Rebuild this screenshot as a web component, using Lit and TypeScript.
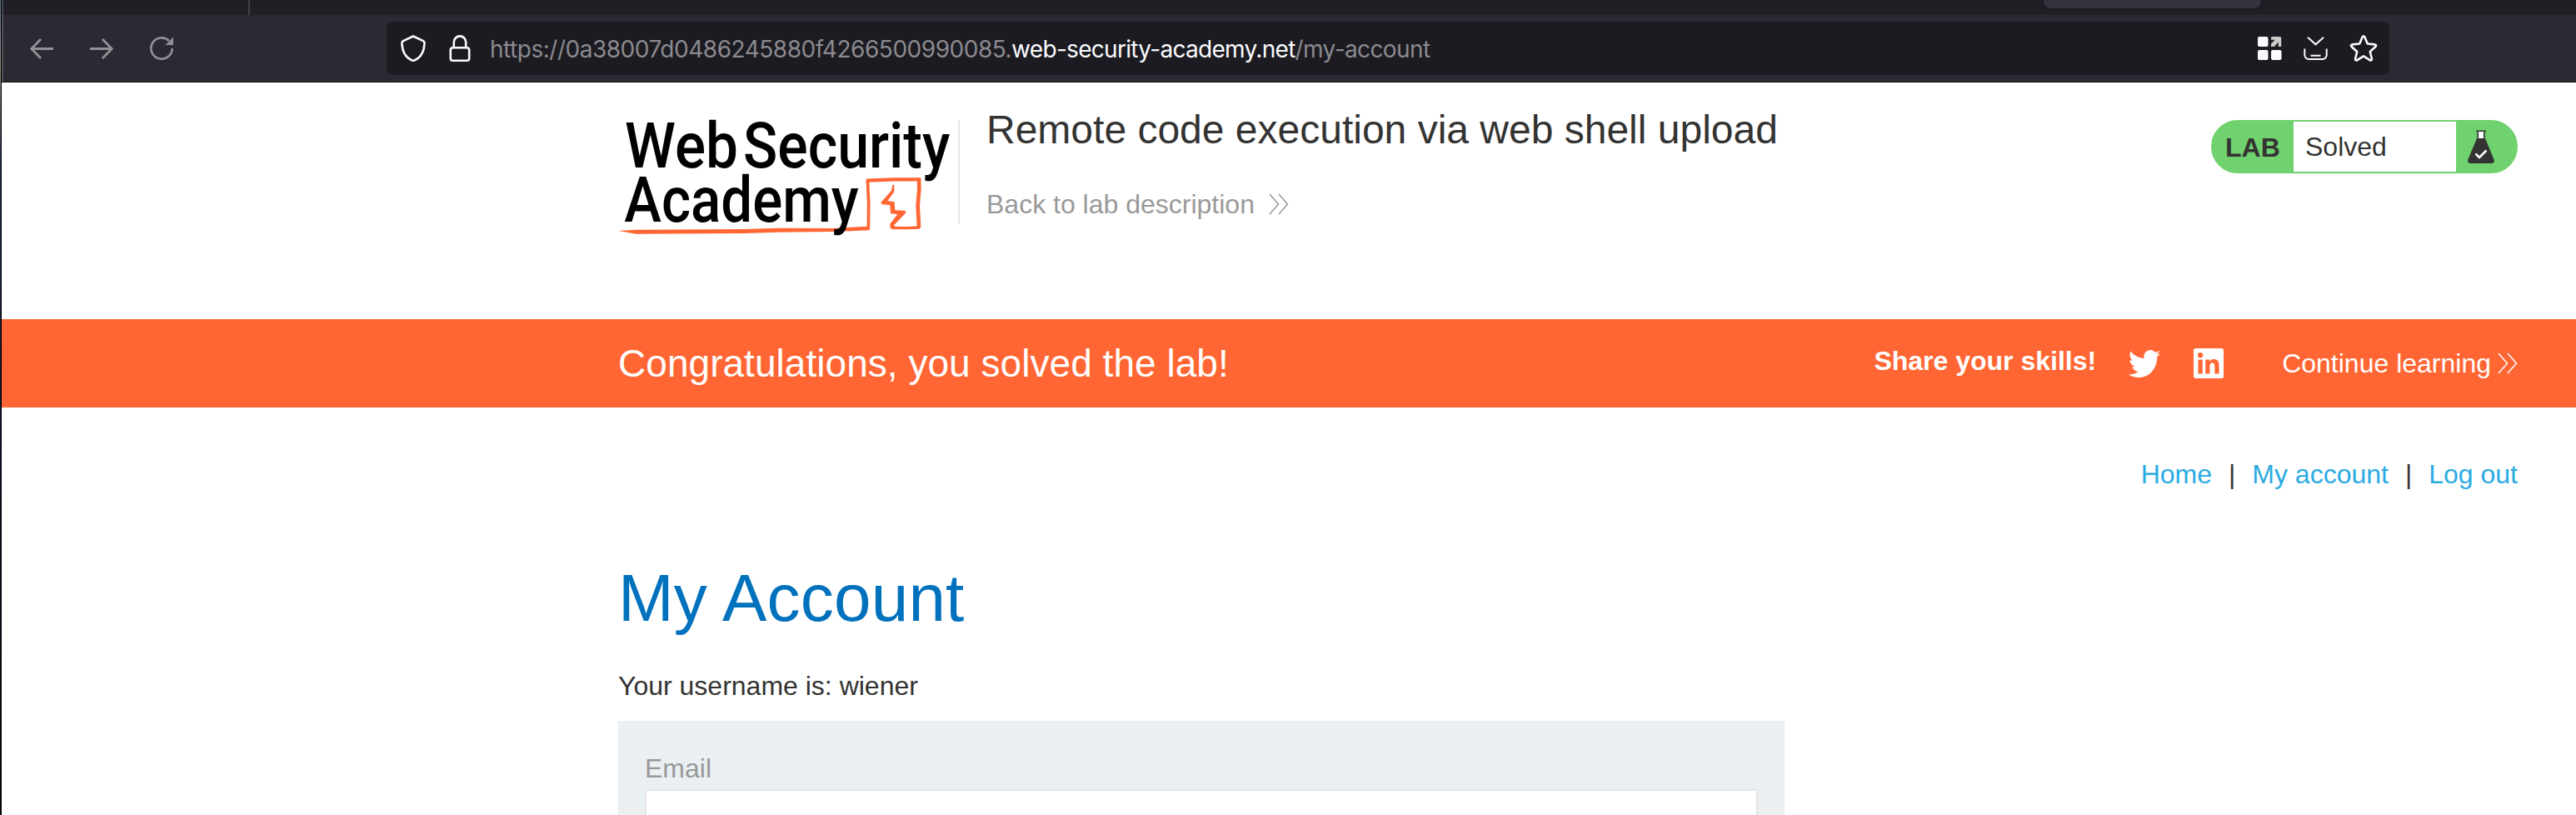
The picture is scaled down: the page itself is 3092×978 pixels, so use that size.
import { LitElement, html, css } from "lit";
import { customElement } from "lit/decorators.js";

const chevrons = html`<svg class="chev" viewBox="0 0 24 26" width="24" height="26">
  <path d="M1 1 L11.5 13 L1 25 M12 1 L22.5 13 L12 25" fill="none" stroke="currentColor" stroke-width="1.5" /></svg>`;

@customElement("browser-chrome")
class BrowserChrome extends LitElement {
  static styles = css`
    :host { display: block; font-family: Inter, sans-serif; }
    .tabs { height: 18px; background: #201f25; display: flex; align-items: flex-start; border-left: 2px solid #46464d; }
    .sep { width: 2px; height: 18px; margin-left: 294px; background: #424148; }
    .tab { width: 261px; height: 10px; margin-left: 2153px; border-radius: 0 0 8px 8px; background: #35323e; box-shadow: 0 0 4px #15141a; }
    .bar { height: 80px; background: #2b2a33; display: flex; align-items: center; border-left: 2px solid #50505a; }
    .edge { height: 1px; background: #0c0c0d; }
    .nav { display: flex; gap: 44px; padding-left: 32px; width: 428px; color: #929096; }
    .url { width: 2404px; height: 64px; border-radius: 8px; background: #1c1b21; display: flex; align-items: center; color: #fbfbfe; }
    .shield { margin-left: 17px; }
    .lock { margin-left: 28px; }
    .address { margin-left: 23px; padding-top: 2px; font-size: 28px; line-height: 40px; white-space: pre; color: #8b8a8f; flex: 1; letter-spacing: -0.48px; }
    .host { color: #fbfbfe; letter-spacing: -0.7px; }
    .path { letter-spacing: -0.6px; }
    .actions { display: flex; gap: 26px; padding-right: 14px; align-items: center; }
    svg { display: block; }
  `;
  render() {
    return html`
      <div class="tabs"><div class="sep"></div><div class="tab"></div></div>
      <div class="bar">
        <div class="nav">
          <svg width="28" height="28" viewBox="0 0 28 28" fill="none" stroke="currentColor" stroke-width="2.8"><path d="M28 14.5H2M13 3L1.8 14.5L13 26" /></svg>
          <svg width="28" height="28" viewBox="0 0 28 28" fill="none" stroke="currentColor" stroke-width="2.8"><path d="M0 14.5H26M15 3L26.2 14.5L15 26" /></svg>
          <svg width="28" height="28" viewBox="0 0 28 28" fill="none" stroke="currentColor" stroke-width="2.6"><path d="M26.7 14A12.7 12.7 0 1 1 22.8 4.9" /><path d="M28 .5V10H18.5Z" fill="currentColor" stroke="none" /></svg>
        </div>
        <div class="url">
          <svg class="shield" width="30" height="32" viewBox="0 0 30 32" fill="none" stroke="currentColor" stroke-width="2.6" stroke-linejoin="round"><path d="M15 1.5L27 7.2Q28.8 8.2 28.5 10.5C28 20 24 27 17 30.2Q15 31 13 30.2C6 27 2 20 1.5 10.5Q1.2 8.2 3 7.2Z" /></svg>
          <svg class="lock" width="26" height="32" viewBox="0 0 26 32" fill="none" stroke="currentColor" stroke-width="2.6"><rect x="1.8" y="15.3" width="22.4" height="15.4" rx="2.8" /><path d="M5.8 15V8.6a7.2 7.2 0 0 1 14.4 0V15" /></svg>
          <div class="address">https://0a38007d0486245880f4266500990085.<span class="host">web-security-academy.net</span><span class="path">/my-account</span></div>
          <div class="actions">
            <svg width="30" height="28" viewBox="0 0 30 28" fill="currentColor"><rect x="1" width="12.5" height="12" rx="2" /><rect x="1" y="16" width="12.5" height="12" rx="2" /><rect x="17" y="16" width="12.5" height="12" rx="2" /><path fill="#cbcbcb" d="M17.8 0H27.5Q29.2 0 29.2 2V12H25.8V6.6L20.8 12H17V8.4L21.7 3.8H17V1Z" /></svg>
            <svg width="29" height="28" viewBox="0 0 29 28" fill="none" stroke="currentColor" stroke-width="2"><path d="M5 .8L14.5 9.3L24 .8M1.3 14.5V22a5 5 0 0 0 5 5H22.7a5 5 0 0 0 5-5V14.5M8.5 22.8H20.5" /></svg>
            <svg width="34" height="32" viewBox="0 0 34 32" fill="none" stroke="currentColor" stroke-width="2.6" stroke-linejoin="round"><path d="M15.6 2.4Q17 .2 18.4 2.4L21.8 10.5L30.6 11.4Q33 12 31.4 14L24.8 20L26.9 28.5Q27 31 24.6 30.2L17 25.4L9.4 30.2Q7 31 7.1 28.5L9.2 20L2.6 14Q1 12 3.4 11.4L12.2 10.5Z" /></svg>
          </div>
        </div>
      </div>
      <div class="edge"></div>`;
  }
}

@customElement("academy-logo")
class AcademyLogo extends LitElement {
  static styles = css`
    :host { display: block; }
    svg { display: block; overflow: visible; }
    .word { font-family: Roboto, sans-serif; font-weight: 500; font-size: 229px; fill: #000; }
    .line { fill: none; stroke: #ff6633; stroke-linejoin: round; }
    .fill { fill: #ff6633; }
  `;
  render() {
    return html`<svg width="408" height="147" viewBox="66 60 1224 441">
      <path class="fill" d="M66 471 L130 467 L520 465 L640 461 L840 462 L962 455 L972 460 L970 469 L840 474 L640 476 L520 480 L130 482 Z" />
      <path class="line" stroke-width="11" d="M967 465 L968 370 L964 286" />
      <path class="line" stroke-width="13" d="M961 290 L1060 286 L1150 286" />
      <path class="line" stroke-width="14" d="M1149 280 L1150 320 L1145 380 L1149 459" />
      <path class="line" stroke-width="10" d="M1152 459 L1100 461 L1051 460" />
      <path class="fill" d="M1054 305 L1060 306 L1060 330 L1036 363 L1061 367 L1063 397 L1098 398 L1103 405 L1060 450 L1062 460 L1046 463 L1045 446 L1072 411 L1047 409 L1045 378 L1016 376 L1012 369 L1050 326 Z" />
      <text class="word" x="90" y="244" textLength="408" lengthAdjust="spacingAndGlyphs">Web</text>
      <text class="word" x="516" y="244" textLength="745" lengthAdjust="spacingAndGlyphs">Security</text>
      <text class="word" x="88" y="439" textLength="844" lengthAdjust="spacingAndGlyphs">Academy</text>
    </svg>`;
  }
}

@customElement("lab-status")
class LabStatus extends LitElement {
  static styles = css`
    :host { display: block; }
    .pill { box-sizing: border-box; width: 368px; height: 64px; border: 2px solid #70d26e; border-radius: 32px; background: #70d26e; display: flex; align-items: center; color: #333332; font-size: 32px; overflow: hidden; }
    .tag { width: 97px; box-sizing: border-box; padding-left: 15px; font-weight: bold; line-height: 60px; padding-top: 2px; }
    .state { width: 195px; height: 60px; line-height: 60px; box-sizing: border-box; padding-left: 14px; background: #fff; }
    .flask { margin-left: 14px; display: block; }
  `;
  render() {
    return html`<div class="pill">
      <div class="tag">LAB</div><div class="state">Solved</div>
      <svg class="flask" width="32" height="40" viewBox="0 0 32 40">
        <path d="M12.5 2H19.5V11H12.5Z" fill="#fff" />
        <path d="M10 1.2H22M12.2 1.5V11M19.8 1.5V11" stroke="#333332" stroke-width="1.6" fill="none" />
        <path d="M11 10H21L31.4 35Q33 40 28.5 40H3.5Q-1 40 .6 35Z" fill="#333332" />
        <path d="M9.5 28.5L14 33L22.5 24.5" stroke="#fff" stroke-width="2.6" fill="none" />
      </svg></div>`;
  }
}

@customElement("app-root")
class AppRoot extends LitElement {
  static styles = css`
    :host { display: flex; height: 978px; overflow: hidden; background: #fff; font-family: "Liberation Sans", Arial, sans-serif; color: #333332; font-size: 32px; }
    .frame { width: 1px; flex: none; border-right: 1px solid #000; background: linear-gradient(#5c6f86, #7d8894 50px, #8a8577 85px, #5d6068 130px, #1d2f50 200px, #0c1730 500px, #04070f 978px); }
    .page { flex: 1; min-width: 0; }
    .row { display: flex; padding: 0 70px 0 740px; }
    .header { height: 284px; box-sizing: border-box; align-items: flex-start; }
    .logo { margin-top: 41px; }
    .title { margin-top: 45px; height: 124px; border-left: 2px solid #e5e5e5; padding-left: 32px; flex: 1; }
    .title h2 { font-size: 48px; font-weight: 400; line-height: 56px; margin: -16px 0 0; }
    .back { display: flex; align-items: center; color: #999; line-height: 38px; margin-top: 42px; gap: 17px; }
    .status { margin-top: 45px; }
    .banner { height: 106px; box-sizing: border-box; background: #ff6633; color: #fff; align-items: center; }
    .congrats { font-size: 46px; letter-spacing: 0.04px; flex: 1; line-height: 56px; }
    .share { font-weight: bold; padding-bottom: 6px; }
    .twitter { margin-left: 39px; }
    .linkedin { margin-left: 40px; }
    .next { display: flex; align-items: center; gap: 8px; margin-left: 70px; }
    .links { justify-content: flex-end; margin-top: 61px; line-height: 38px; gap: 20px; }
    .links a { color: #29abe2; }
    .account { padding: 0 0 0 740px; width: 1400px; }
    h1 { font-size: 80px; font-weight: 400; line-height: 92px; letter-spacing: 0.2px; margin: 84px 0 0; color: #0071bc; }
    p { margin: 41px 0 0; line-height: 36px; }
    .form { background: #eaeff2; margin-top: 24px; height: 140px; padding: 38px 32px 0; box-sizing: border-box; }
    label { display: block; color: #999; line-height: 38px; }
    .input { box-sizing: border-box; height: 80px; margin-top: 6px; background: #fff; border: 2px solid #e5e5e5; }
    svg { display: block; }
  `;
  render() {
    return html`
      <div class="frame"></div>
      <div class="page">
        <browser-chrome></browser-chrome>
        <div class="row header">
          <academy-logo class="logo"></academy-logo>
          <div class="title">
            <h2>Remote code execution via web shell upload</h2>
            <div class="back"><span>Back to lab description</span>${chevrons}</div>
          </div>
          <lab-status class="status"></lab-status>
        </div>
        <div class="row banner">
          <div class="congrats">Congratulations, you solved the lab!</div>
          <div class="share">Share your skills!</div>
          <svg class="twitter" width="38" height="33" viewBox="0 2.2 24 19.6" preserveAspectRatio="none" fill="#fff"><path d="M23.95 4.57a10 10 0 0 1-2.82.77 4.96 4.96 0 0 0 2.16-2.72c-.95.55-2 .96-3.13 1.18a4.92 4.92 0 0 0-8.38 4.48C7.69 8.1 4.07 6.13 1.64 3.16a4.92 4.92 0 0 0 1.52 6.57 4.9 4.9 0 0 1-2.23-.61v.06a4.92 4.92 0 0 0 3.95 4.83 5 5 0 0 1-2.21.08 4.94 4.94 0 0 0 4.6 3.42A9.87 9.87 0 0 1 0 19.54a13.99 13.99 0 0 0 7.55 2.21c9.05 0 14-7.5 14-13.98 0-.21 0-.42-.02-.63a9.94 9.94 0 0 0 2.46-2.55z" /></svg>
          <svg class="linkedin" width="36" height="36" viewBox="0 0 36 36"><rect width="36" height="36" rx="2.5" fill="#fff" /><g fill="#ff6633"><rect x="5.5" y="13.5" width="5.2" height="17" /><circle cx="8.1" cy="8.2" r="3.1" /><path d="M14.2 13.5H19.2V15.9C20.2 14.2 22 13.1 24.3 13.1C29.4 13.1 30.5 16.5 30.5 21V30.5H25.3V22.1C25.3 20.1 25.2 17.6 22.5 17.6C19.9 17.6 19.4 19.7 19.4 22V30.5H14.2Z" /></g></svg>
          <div class="next"><span>Continue learning</span>${chevrons}</div>
        </div>
        <nav class="row links"><a>Home</a><span>|</span><a>My account</a><span>|</span><a>Log out</a></nav>
        <main class="account">
          <h1>My Account</h1>
          <p>Your username is: wiener</p>
          <div class="form"><label>Email</label><div class="input"></div></div>
        </main>
      </div>`;
  }
}
